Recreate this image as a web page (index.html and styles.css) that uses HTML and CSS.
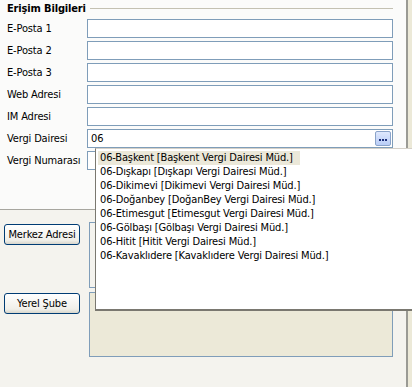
FILE: index.html
```html
<!DOCTYPE html>
<html lang="tr">
<head>
<meta charset="utf-8">
<title>Erişim Bilgileri</title>
<link rel="stylesheet" href="styles.css">
</head>
<body>
<div class="window">
  <div class="main">
    <section class="access">
      <div class="legend"><span class="legend-text">Erişim Bilgileri</span><i class="rule"></i></div>
      <div class="form">
        <label class="lbl">E-Posta 1</label><div class="field"></div>
        <label class="lbl">E-Posta 2</label><div class="field"></div>
        <label class="lbl">E-Posta 3</label><div class="field"></div>
        <label class="lbl">Web Adresi</label><div class="field"></div>
        <label class="lbl">IM Adresi</label><div class="field"></div>
        <label class="lbl">Vergi Dairesi</label>
        <div class="field combo"><span class="value">06</span><span class="dots"><svg width="14" height="13" viewBox="0 0 14 13"><rect x="3" y="7" width="2" height="2" fill="#1c2f7a"/><rect x="6" y="7" width="2" height="2" fill="#1c2f7a"/><rect x="9" y="7" width="2" height="2" fill="#1c2f7a"/></svg></span></div>
        <label class="lbl">Vergi Numarası</label><div class="field"></div>
      </div>
    </section>
    <section class="addresses">
      <div class="addr merkez"><button class="btn">Merkez Adresi</button><div class="box"></div></div>
      <div class="addr yerel"><button class="btn">Yerel Şube</button><div class="box disabled"></div></div>
    </section>
  </div>
  <div class="edge"></div>
  <ul class="dropdown">
    <li><span class="item selected">06-Başkent [Başkent Vergi Dairesi Müd.]</span></li>
    <li><span class="item">06-Dışkapı [Dışkapı Vergi Dairesi Müd.]</span></li>
    <li><span class="item">06-Dikimevi [Dikimevi Vergi Dairesi Müd.]</span></li>
    <li><span class="item">06-Doğanbey [DoğanBey Vergi Dairesi Müd.]</span></li>
    <li><span class="item">06-Etimesgut [Etimesgut Vergi Dairesi Müd.]</span></li>
    <li><span class="item">06-Gölbaşı [Gölbaşı Vergi Dairesi Müd.]</span></li>
    <li><span class="item">06-Hitit [Hitit Vergi Dairesi Müd.]</span></li>
    <li><span class="item">06-Kavaklıdere [Kavaklıdere Vergi Dairesi Müd.]</span></li>
  </ul>
</div>
</body>
</html>
```
FILE: styles.css
```css
* { box-sizing: border-box; }
html, body { margin: 0; padding: 0; }
body {
  font-family: "DejaVu Sans Condensed", "Liberation Sans", sans-serif;
  font-size: 11px;
  letter-spacing: -0.15px;
  color: #000;
  background: #ece9d8;
}
.window {
  position: relative;
  width: 412px;
  height: 387px;
  display: flex;
  overflow: hidden;
}
.main {
  width: 406px;
  background: #f4f3ee;
  display: flex;
  flex-direction: column;
}
.edge {
  width: 2px;
  background: #9a9a94;
}
.access {
  height: 210px;
  background: #fbfbfa;
  border-bottom: 1px solid #a7a69f;
  padding: 2px 13px 0 7px;
}
.legend {
  height: 13px;
  display: flex;
  align-items: center;
  gap: 4px;
}
.legend-text {
  font-weight: bold;
  line-height: 13px;
}
.rule {
  flex: 1;
  height: 1px;
  background: #c4c1b2;
}
.form {
  margin-top: 4px;
  display: grid;
  grid-template-columns: 80px 1fr;
  grid-auto-rows: 19px;
  row-gap: 3px;
  align-items: center;
}
.lbl { line-height: 13px; white-space: nowrap; }
.field {
  height: 19px;
  border: 1px solid #7f9db9;
  background: #fff;
}
.combo {
  display: flex;
  align-items: center;
  justify-content: space-between;
  padding: 0 1px 0 3px;
}
.dots {
  width: 16px;
  height: 15px;
  border: 1px solid #8aa3c9;
  border-radius: 2px;
  background: linear-gradient(#dfe8fd, #b9cdf6);
  display: flex;
  align-items: center;
  justify-content: center;
}
.dots svg { display: block; }
.addresses {
  padding: 12px 13px 0 4px;
  display: flex;
  flex-direction: column;
  gap: 4px;
}
.addr {
  display: flex;
  align-items: flex-start;
  gap: 9px;
}
.btn {
  width: 76px;
  height: 21px;
  font: inherit;
  letter-spacing: inherit;
  color: #000;
  border: 1px solid #003c74;
  border-radius: 3px;
  background: linear-gradient(#ffffff, #f0efe9 80%, #d8d6cc);
  padding: 0;
}
.merkez .btn { margin-top: 2px; }
.yerel .btn { margin-top: 1px; }
.box {
  flex: 1;
  border: 1px solid #7f9db9;
  background: #f4f3ee;
}
.merkez .box { height: 66px; }
.yerel .box { height: 65px; }
.box.disabled { background: #ece9d8; }
.dropdown {
  position: absolute;
  left: 95px;
  top: 148px;
  right: 0;
  height: 163px;
  margin: 0;
  padding: 2px 0 0 2px;
  list-style: none;
  background: #fff;
  border-top: 1px solid #d4d0c8;
  border-left: 1px solid #7a7870;
  border-bottom: 2px solid #7a7870;
}
.dropdown li {
  height: 14px;
  line-height: 14px;
  white-space: nowrap;
}
.item {
  display: inline-block;
  padding: 0 7px 0 2px;
}
.item.selected { background: #ebe8d9; }
```
